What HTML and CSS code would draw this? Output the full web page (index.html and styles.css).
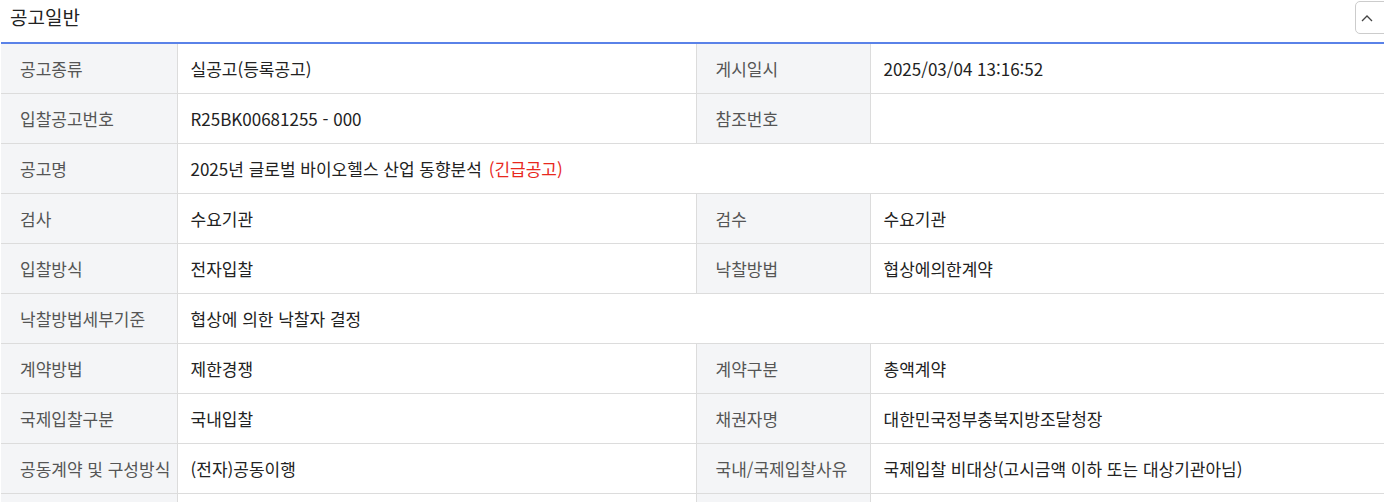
FILE: index.html
```html
<!DOCTYPE html>
<html lang="ko">
<head>
<meta charset="utf-8">
<link rel="stylesheet" href="styles.css">
</head>
<body>
<div class="panel">
  <div class="panel-head">
    <h2 class="panel-title">공고일반</h2>
    <button class="toggle" type="button" aria-label="접기">
      <svg width="12" height="8" viewBox="0 0 12 8"><path d="M1 7 L6 2 L11 7" fill="none" stroke="#444" stroke-width="1.3"/></svg>
    </button>
  </div>
  <table class="info">
    <colgroup>
      <col class="c-l1"><col class="c-v1"><col class="c-l2"><col class="c-v2">
    </colgroup>
    <tbody>
      <tr><th>공고종류</th><td>실공고(등록공고)</td><th>게시일시</th><td>2025/03/04 13:16:52</td></tr>
      <tr><th>입찰공고번호</th><td>R25BK00681255 - 000</td><th>참조번호</th><td></td></tr>
      <tr><th>공고명</th><td colspan="3">2025년 글로벌 바이오헬스 산업 동향분석 <span class="urgent">(긴급공고)</span></td></tr>
      <tr><th>검사</th><td>수요기관</td><th>검수</th><td>수요기관</td></tr>
      <tr><th>입찰방식</th><td>전자입찰</td><th>낙찰방법</th><td>협상에의한계약</td></tr>
      <tr><th>낙찰방법세부기준</th><td colspan="3">협상에 의한 낙찰자 결정</td></tr>
      <tr><th>계약방법</th><td>제한경쟁</td><th>계약구분</th><td>총액계약</td></tr>
      <tr><th>국제입찰구분</th><td>국내입찰</td><th>채권자명</th><td>대한민국정부충북지방조달청장</td></tr>
      <tr><th>공동계약 및 구성방식</th><td>(전자)공동이행</td><th>국내/국제입찰사유</th><td>국제입찰 비대상(고시금액 이하 또는 대상기관아님)</td></tr>
      <tr><th></th><td></td><th></th><td></td></tr>
    </tbody>
  </table>
</div>
</body>
</html>
```

FILE: styles.css
```css
html, body {
  margin: 0;
  padding: 0;
  background: #fff;
  overflow: hidden;
}
body {
  font-family: "Noto Sans CJK KR", "Noto Sans", sans-serif;
  color: #222;
}
.panel {
  width: 1400px;
  padding-left: 1px;
}
.panel-head {
  height: 42px;
  display: flex;
  align-items: flex-start;
  justify-content: space-between;
}
.panel-title {
  margin: 0;
  padding: 4px 0 0 9px;
  font-size: 19px;
  font-weight: 400;
  line-height: 26px;
  color: #222;
}
.toggle {
  margin: 1px 2px 0 0;
  width: 44px;
  height: 33px;
  border: 1px solid #ccc;
  border-radius: 5px;
  background: #fff;
  padding: 0 0 0 5px;
  display: flex;
  align-items: center;
  justify-content: flex-start;
}
.info {
  width: 1400px;
  border-collapse: collapse;
  border-top: 2px solid #5a82e8;
  table-layout: fixed;
}
.c-l1 { width: 176px; }
.c-v1 { width: 519px; }
.c-l2 { width: 174px; }
.c-v2 { width: auto; }
.info th, .info td {
  height: 49px;
  padding: 0;
  border-bottom: 1px solid #dcdcdc;
  border-right: 1px solid #dcdcdc;
  font-size: 17px;
  line-height: 22px;
  text-align: left;
  vertical-align: middle;
  white-space: nowrap;
}
.info th {
  background: #f4f5f7;
  color: #555;
  font-weight: 400;
  padding-left: 19px;
}
.info td {
  color: #222;
  padding-left: 13px;
}
.urgent {
  color: #e8281e;
  margin-left: 2px;
}
```
